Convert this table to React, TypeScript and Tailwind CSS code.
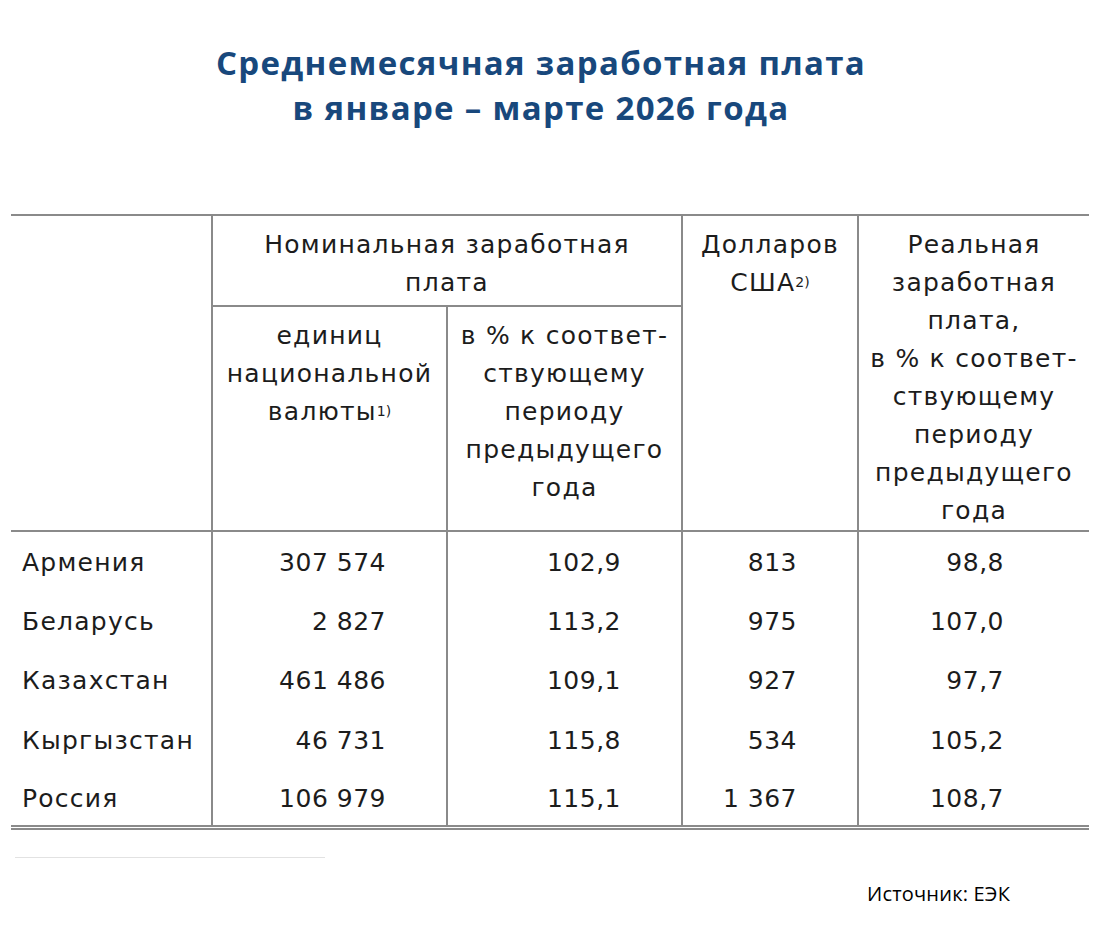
import React from "react";

const rows = [
  ["Армения", "307 574", "102,9", "813", "98,8"],
  ["Беларусь", "2 827", "113,2", "975", "107,0"],
  ["Казахстан", "461 486", "109,1", "927", "97,7"],
  ["Кыргызстан", "46 731", "115,8", "534", "105,2"],
  ["Россия", "106 979", "115,1", "1 367", "108,7"],
];

export default function App() {
  return (
    <div
      className="w-[1102px] h-[952px] bg-white text-[#1c1c1c]"
      style={{ fontFamily: '"Open Sans", "DejaVu Sans", sans-serif' }}
    >
      <h1 className="pt-[40px] pr-[20px] text-center text-[33px] leading-[45px] font-bold tracking-[0.04em] text-[#18487c]">
        Среднемесячная заработная плата
        <br />в январе – марте 2026 года
      </h1>

      <table
        className="mt-[84px] ml-[11px] border-collapse text-[25px] leading-[38px] tracking-[0.05em]"
        style={{ fontFamily: '"DejaVu Sans", "Open Sans", sans-serif' }}
      >
        <colgroup>
          <col className="w-[201px]" />
          <col className="w-[235px]" />
          <col className="w-[235px]" />
          <col className="w-[176px]" />
          <col className="w-[231px]" />
        </colgroup>
        <thead>
          <tr className="border-t-2 border-[#8a8a8a]">
            <th rowSpan={2} className="border-b-2 border-[#8a8a8a] p-0" />
            <th
              colSpan={2}
              className="h-[91px] border-x-2 border-b-2 border-[#8a8a8a] px-2 pt-[10px] pb-0 align-top font-normal text-center"
            >
              Номинальная заработная
              <br />
              плата
            </th>
            <th
              rowSpan={2}
              className="border-x-2 border-b-2 border-[#8a8a8a] px-1 pt-[10px] align-top font-normal text-center"
            >
              Долларов
              <br />
              США<sup className="text-[14px] tracking-normal relative -top-[4px]">2)</sup>
            </th>
            <th
              rowSpan={2}
              className="border-b-2 border-[#8a8a8a] px-1 pt-[10px] align-top font-normal text-center"
            >
              Реальная
              <br />
              заработная
              <br />
              плата,
              <br />в % к соответ-
              <br />
              ствующему
              <br />
              периоду
              <br />
              предыдущего
              <br />
              года
            </th>
          </tr>
          <tr>
            <th className="h-[224px] border-x-2 border-b-2 border-[#8a8a8a] px-0 pt-[10px] align-top font-normal text-center">
              единиц
              <br />
              национальной
              <br />
              валюты<sup className="text-[14px] tracking-normal relative -top-[4px]">1)</sup>
            </th>
            <th className="border-x-2 border-b-2 border-[#8a8a8a] px-0 pt-[10px] align-top font-normal text-center">
              в % к соответ-
              <br />
              ствующему
              <br />
              периоду
              <br />
              предыдущего
              <br />
              года
            </th>
          </tr>
        </thead>
        <tbody className="border-b-[5px] border-double border-[#8a8a8a]">
          {rows.map((r) => (
            <tr key={r[0]} className="h-[59.4px]">
              <td className="pl-[11px] pt-[4px] align-middle">{r[0]}</td>
              <td className="border-x-2 border-[#8a8a8a] pr-[60px] pt-[4px] text-right align-middle tracking-[0.02em]">{r[1]}</td>
              <td className="border-x-2 border-[#8a8a8a] pr-[60px] pt-[4px] text-right align-middle tracking-[0.02em]">{r[2]}</td>
              <td className="border-x-2 border-[#8a8a8a] pr-[60px] pt-[4px] text-right align-middle tracking-[0.02em]">{r[3]}</td>
              <td className="pr-[85px] pt-[4px] text-right align-middle tracking-[0.02em]">{r[4]}</td>
            </tr>
          ))}
        </tbody>
      </table>

      <div className="mt-[27px] ml-[15px] w-[310px] h-px bg-[#e2e2e2]" />

      <div className="mt-[24px] pl-[867px] text-[20px] leading-[24px] tracking-[0.01em] text-black">
        Источник: ЕЭК
      </div>
    </div>
  );
}
